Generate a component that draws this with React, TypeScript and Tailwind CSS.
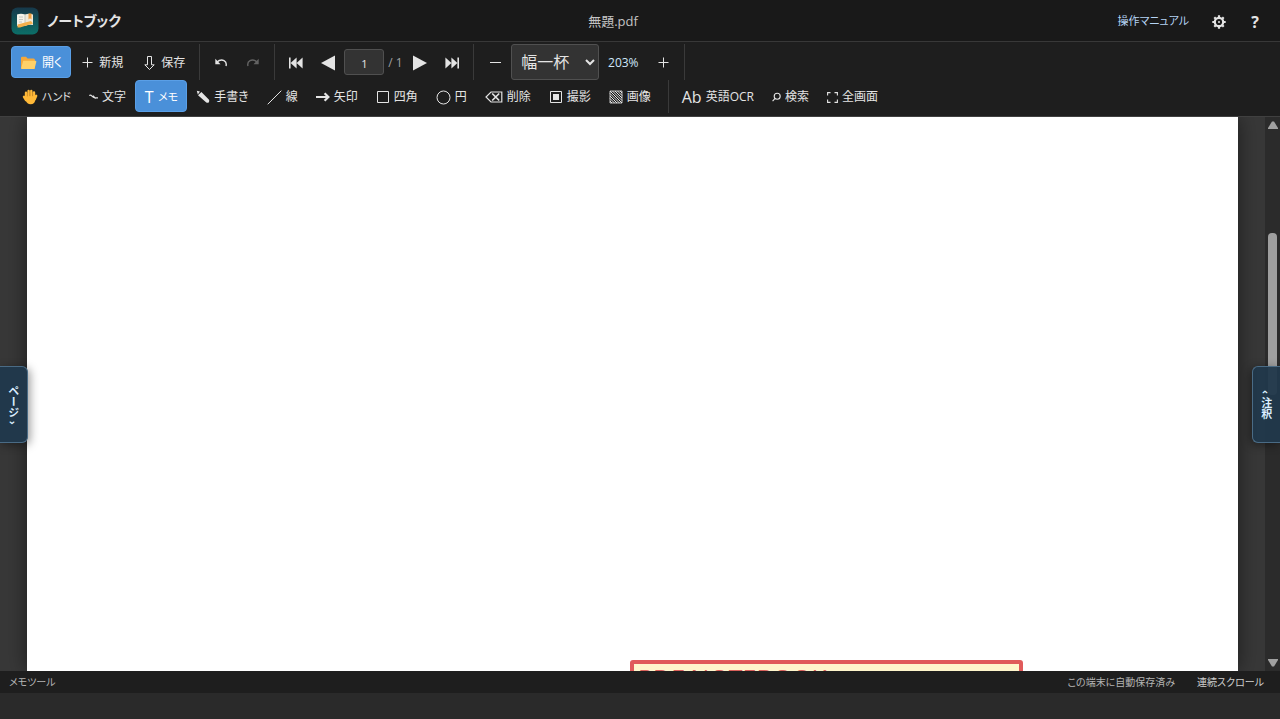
import { useState, type ReactNode } from 'react'

const BTN = 'flex h-8 shrink-0 items-center justify-center rounded border pt-[2px] whitespace-nowrap'
const BTN_OFF = 'border-transparent hover:bg-[#333]'
const BTN_ON = 'border-[#5a9fe6] bg-[#4a90d9] text-white'

function Logo() {
  return (
    <svg width="28" height="28" viewBox="0 0 28 28" aria-hidden="true">
      <defs>
        <linearGradient id="logoBg" x1="0" y1="0" x2="0" y2="1">
          <stop offset="0" stopColor="#17384a" />
          <stop offset="1" stopColor="#0c6f68" />
        </linearGradient>
      </defs>
      <rect x="0.5" y="0.5" width="27" height="27" rx="6" fill="url(#logoBg)" />
      <path d="M6 7.5Q10 6 14 7.5V19Q10 17.5 6 19Z" fill="#f6f3ea" />
      <path d="M14 7.5Q18 6 22 7.5V18Q18 17 14 19Z" fill="#efe9da" />
      <path d="M14 7.5V18.5M8 10h4M8 12.5h4M8 15h3" stroke="#b9bdb8" strokeWidth="0.8" />
      <path d="M17.5 6.5h3v6l-1.5-1.3-1.5 1.3z" fill="#f0a040" />
      <path d="M6.5 17.5L20 14l2 2.5L9 20.5H6.5z" fill="#f5b04c" />
    </svg>
  )
}

function FolderIcon() {
  return (
    <svg width="17" height="14" viewBox="0 0 17 14" aria-hidden="true">
      <path d="M1 2Q1 .8 2.2.8H6l1.6 1.7h6Q15 2.5 15 4v9H2Q1 13 1 12z" fill="#f5a83b" />
      <path d="M3.2 4.8h12.2q1.1 0 .9 1.2l-1.6 6q-.3 1-1.3 1H2q-1 0-.8-1z" fill="#ffd16a" />
    </svg>
  )
}

function HandIcon() {
  return (
    <svg width="16" height="16" viewBox="0 0 16 16" fill="none" stroke="#ffb938" strokeLinecap="round" aria-hidden="true">
      <path d="M4 8V3.8M6.6 7V2M9.3 7V1.9M12 8V3.4" strokeWidth="2.4" />
      <path d="M2 7.8l2 3.2M14.2 6.8L12.6 10.5" strokeWidth="2.4" />
      <path d="M3 7h10.2v3.4Q13 15 8.6 15.2 5 15.2 3.6 11.6z" fill="#ffb938" stroke="none" />
      <path d="M5.3 4.5v3M8 3.5v3.6M10.7 4v3.2" stroke="#e09320" strokeWidth="0.5" />
    </svg>
  )
}

const line = { fill: 'none', stroke: 'currentColor', 'aria-hidden': true } as const

const Plus = () => <svg width="11" height="12" viewBox="0 0 11 12" {...line}><path d="M.5 5.5h10M5.5.5v10" /></svg>
const Minus = () => <svg width="11" height="12" viewBox="0 0 11 12" {...line}><path d="M0 5.5h11" /></svg>
const DownArrow = () => <svg width="11" height="14" viewBox="0 0 11 14" {...line}><path d="M3.5.5h4v8.3h2.7L5.5 13.5.8 8.8h2.7z" /></svg>
const Undo = () => (
  <svg width="12" height="10" viewBox="0 0 12 10" {...line}>
    <path d="M1.7 4.2Q5.5 1 9 2.6q3 1.6 2 5.4" strokeWidth="1.4" />
    <path d="M.3.8v5.4h5.2z" fill="currentColor" stroke="none" />
  </svg>
)
const Redo = () => (
  <svg width="12" height="10" viewBox="0 0 12 10" {...line}>
    <path d="M10.3 4.2Q6.5 1 3 2.6 0 4.2 1 8" strokeWidth="1.4" />
    <path d="M11.7.8v5.4H6.5z" fill="currentColor" stroke="none" />
  </svg>
)
const First = () => <svg width="14" height="12" viewBox="0 0 14 12" fill="currentColor" aria-hidden="true"><path d="M0 .5h1.6v11H0zM1.6 6l6-5.5v11zM7.6 6l6-5.5v11z" /></svg>
const Last = () => <svg width="14" height="12" viewBox="0 0 14 12" fill="currentColor" aria-hidden="true"><path d="M12.4.5H14v11h-1.6zM12.4 6l-6-5.5v11zM6.4 6l-6-5.5v11z" /></svg>
const Prev = () => <svg width="14" height="16" viewBox="0 0 14 16" fill="currentColor" aria-hidden="true"><path d="M0 8L14 .5v15z" /></svg>
const Next = () => <svg width="14" height="16" viewBox="0 0 14 16" fill="currentColor" aria-hidden="true"><path d="M14 8L0 .5v15z" /></svg>

const Squiggle = () => (
  <svg width="9" height="8" viewBox="0 0 9 8" {...line}>
    <path d="M.3 2.6Q1.5 1.6 3 3.2T5.6 4.6L9 4.8M4 2.6l2.6 3" strokeWidth="1.2" />
  </svg>
)
const Letter = () => <span className="w-[10px] text-base leading-4">T</span>
const Pencil = () => (
  <svg width="14" height="14" viewBox="0 0 14 14" fill="currentColor" aria-hidden="true">
    <path d="M.8.8L4 1.4 1.8 4.4zM2 5.2L5.4 2l7.4 7.6q1 1.4.1 2.6-1.2 1-2.6.2z" />
  </svg>
)
const Diagonal = () => <svg width="15" height="15" viewBox="0 0 15 15" {...line}><path d="M.7 14.3L14.3.7" /></svg>
const Arrow = () => <svg width="14" height="12" viewBox="0 0 14 12" {...line}><path d="M0 6h12M8.6 2.2L12.4 6 8.6 9.8" strokeWidth="2.2" /></svg>
const Square = () => <svg width="14" height="14" viewBox="0 0 14 14" {...line}><path d="M1.5 1.5h11v11h-11z" /></svg>
const Circle = () => <svg width="15" height="15" viewBox="0 0 15 15" {...line}><circle cx="7.5" cy="7.5" r="6.5" /></svg>
const Erase = () => (
  <svg width="18" height="12" viewBox="0 0 18 12" {...line}>
    <path d="M6 1h10.8v10H6L1 6z" strokeWidth="1.2" />
    <path d="M7.2 2.5l7 7M14.2 2.5l-7 7" strokeWidth="1.7" />
  </svg>
)
const Capture = () => <svg width="14" height="14" viewBox="0 0 14 14" {...line}><path d="M1.5 1.5h11v11h-11z" /><path d="M4 4h6v6H4z" fill="currentColor" stroke="none" /></svg>
const Hatch = () => (
  <svg width="14" height="14" viewBox="0 0 14 14" {...line}>
    <path d="M1 1h12v12H1z" strokeWidth="0.8" />
    <path d="M1 1l12 12M3.5 1L13 10.5M6 1l7 7M8.5 1L13 5.5M11 1l2 2M1 3.5L10.5 13M1 6l7 7M1 8.5L5.5 13M1 11l2 2" />
  </svg>
)
const Lens = () => <svg width="9" height="10" viewBox="0 0 9 10" {...line}><circle cx="5.2" cy="4.2" r="3" strokeWidth="1.1" /><path d="M3.1 6.4L.6 9.2" strokeWidth="1.1" /></svg>
const Full = () => <svg width="11" height="11" viewBox="0 0 11 11" {...line}><path d="M.6 3.5V.6h2.9M7.5.6h2.9v2.9M10.4 7.5v2.9H7.5M3.5 10.4H.6V7.5" strokeWidth="1.1" /></svg>
const Gear = () => (
  <svg width="14" height="14" viewBox="0 0 14 14" {...line}>
    <circle cx="7" cy="7" r="4.2" strokeWidth="2.2" />
    <circle cx="7" cy="7" r="1" fill="currentColor" stroke="none" />
    <path d="M7 .3v2M7 11.7v2M.3 7h2M11.7 7h2M2.3 2.3l1.4 1.4M10.3 10.3l1.4 1.4M11.7 2.3l-1.4 1.4M3.7 10.3l-1.4 1.4" strokeWidth="2.2" />
  </svg>
)

type Tool = { id: string; label: string; icon: ReactNode; kana?: boolean }

const TOOLS: Tool[] = [
  { id: 'hand', label: 'ハンド', icon: <HandIcon />, kana: true },
  { id: 'text', label: '文字', icon: <Squiggle /> },
  { id: 'memo', label: 'メモ', icon: <Letter />, kana: true },
  { id: 'pen', label: '手書き', icon: <Pencil /> },
  { id: 'line', label: '線', icon: <Diagonal /> },
  { id: 'arrow', label: '矢印', icon: <Arrow /> },
  { id: 'rect', label: '四角', icon: <Square /> },
  { id: 'circle', label: '円', icon: <Circle /> },
  { id: 'erase', label: '削除', icon: <Erase /> },
  { id: 'capture', label: '撮影', icon: <Capture /> },
  { id: 'image', label: '画像', icon: <Hatch /> },
]

const ACTIONS: Tool[] = [
  { id: 'ocr', label: '英語OCR', icon: <span className="text-base leading-4">Ab</span> },
  { id: 'search', label: '検索', icon: <Lens /> },
  { id: 'full', label: '全画面', icon: <Full /> },
]

function IconButton({ label, disabled, children }: { label: string; disabled?: boolean; children: ReactNode }) {
  return (
    <button aria-label={label} disabled={disabled} className={`${BTN} ${BTN_OFF} w-8 disabled:opacity-35`}>{children}</button>
  )
}

export default function App() {
  const [tool, setTool] = useState('memo')
  const [page, setPage] = useState('1')
  const [zoom, setZoom] = useState('width')

  return (
    <div className="flex h-screen flex-col overflow-hidden bg-[#2a2a2a] pb-[26px] font-['Open_Sans','Noto_Sans_CJK_JP',sans-serif] text-xs text-[#e4e4e4] [font-feature-settings:'palt']">
      <header className="grid h-[42px] shrink-0 grid-cols-[1fr_auto_1fr] items-center border-b border-[#383838] bg-[#191919] pr-[9px] pl-[11px]">
        <div className="flex items-center gap-2">
          <Logo />
          <h1 className="text-sm font-semibold">ノートブック</h1>
        </div>
        <span className="pt-[2px] pr-14 text-[13px] text-[#c4c4c4]">無題.pdf</span>
        <div className="flex items-center justify-end gap-1">
          <a href="#manual" className="pt-[2px] pr-[10px] text-[11px] text-[#b5d4f5]">操作マニュアル</a>
          <IconButton label="設定"><Gear /></IconButton>
          <IconButton label="ヘルプ"><span className="text-base font-bold">?</span></IconButton>
        </div>
      </header>

      <div className="shrink-0 border-b border-[#404040] bg-[#1e1e1e] px-[11px] pt-[2px] pb-[3px]">
        <div className="flex h-9 items-center">
          <div className="flex h-full items-center gap-px border-r border-[#3a3a3a] pr-1">
            <button className={`${BTN} ${BTN_ON} gap-[5px] px-2`}><FolderIcon />開く</button>
            <button className={`${BTN} ${BTN_OFF} gap-[6px] px-[9px]`}><Plus />新規</button>
            <button className={`${BTN} ${BTN_OFF} gap-[6px] px-[9px]`}><DownArrow />保存</button>
          </div>
          <div className="flex h-full items-center border-r border-[#3a3a3a] px-[5px]">
            <IconButton label="元に戻す"><Undo /></IconButton>
            <IconButton label="やり直し" disabled><Redo /></IconButton>
          </div>
          <div className="flex h-full items-center border-r border-[#3a3a3a] px-[5px]">
            <IconButton label="最初のページ"><First /></IconButton>
            <IconButton label="前のページ"><Prev /></IconButton>
            <input aria-label="ページ番号" value={page} onChange={e => setPage(e.target.value)} className="h-[26px] w-10 rounded-[3px] border border-[#505050] bg-[#333] pt-[2px] text-center text-[11px]" />
            <span className="w-5 pt-[2px] pl-1 whitespace-nowrap text-[#a0a0a0]">/ 1</span>
            <IconButton label="次のページ"><Next /></IconButton>
            <IconButton label="最後のページ"><Last /></IconButton>
          </div>
          <div className="flex h-full items-center border-r border-[#3a3a3a] px-[5px]">
            <IconButton label="縮小"><Minus /></IconButton>
            <select aria-label="表示倍率" value={zoom} onChange={e => setZoom(e.target.value)} className="h-9 w-[88px] rounded-[3px] border border-[#505050] bg-[#333] px-[5px] text-base">
              <option value="width">幅一杯</option>
              <option value="page">全体</option>
            </select>
            <span className="w-12 pt-[2px] text-center text-[#cfe6fa]">203%</span>
            <IconButton label="拡大"><Plus /></IconButton>
          </div>
        </div>

        <div className="flex h-[33px] items-start">
          <div className="flex h-full items-start border-r border-[#3a3a3a] pr-2 pl-[2px]">
            {TOOLS.map(t => (
              <button key={t.id} onClick={() => setTool(t.id)} aria-pressed={tool === t.id} className={`${BTN} ${tool === t.id ? BTN_ON : BTN_OFF} ${t.kana ? 'text-[11px]' : ''} gap-1 px-2`}>
                {t.icon}{t.label}
              </button>
            ))}
          </div>
          <div className="flex items-start pl-1">
            {ACTIONS.map(t => (
              <button key={t.id} className={`${BTN} ${BTN_OFF} gap-1 px-2`}>{t.icon}{t.label}</button>
            ))}
          </div>
        </div>
      </div>

      <main className="relative flex min-h-0 flex-1 bg-[#383838]">
        <div className="min-w-0 flex-1 overflow-hidden px-[27px]">
          {/* PDF page */}
          <div className="relative h-full bg-white shadow-[0_0_20px_rgba(0,0,0,0.5)]">
            <div className="absolute top-[543px] left-[603px] h-32 w-[393px] rounded-[3px] border-4 border-[#e05a5a] bg-[#fff6cc] pl-1 text-[25px] leading-7 text-[#d9605a]">
              PDF NOTEBOOK
            </div>
          </div>
        </div>

        {/* scrollbar */}
        <div className="flex w-[15px] shrink-0 flex-col items-center bg-[#2b2b2b] py-1">
          <svg width="10" height="8" viewBox="0 0 10 8" fill="#a0a0a0" aria-hidden="true"><path d="M4 .5h2L10 7v1H0V7z" /></svg>
          <div className="w-full flex-1 px-[3px] pt-[104px]">
            <div className="h-[162px] rounded bg-[#9f9f9f]" />
          </div>
          <svg width="10" height="8" viewBox="0 0 10 8" fill="#a0a0a0" aria-hidden="true"><path d="M4 7.5h2L10 1V0H0v1z" /></svg>
        </div>

        <button className="absolute top-[249px] left-0 flex h-[77px] w-7 items-center justify-center rounded-r-md border border-l-0 border-[#4a6b85] bg-[#21384b] pr-[2px] text-[11px] font-bold text-[#dcefff] shadow-[2px_2px_10px_rgba(0,0,0,0.4)] [writing-mode:vertical-rl]">
          ページ ›
        </button>
        <button className="absolute top-[249px] right-0 flex h-[77px] w-7 items-center justify-center rounded-l-md border border-r-0 border-[#4a6b85] bg-[#21384b]/95 pr-[2px] text-[11px] font-bold text-[#dcefff] shadow-[-2px_2px_10px_rgba(0,0,0,0.4)] [writing-mode:vertical-rl]">
          ‹ 注釈
        </button>
      </main>

      <footer className="flex h-[22px] shrink-0 items-center gap-[22px] bg-[#1e1e1e] pt-[2px] pr-4 pl-[9px] text-[10px] text-[#b4b4b4]">
        <span className="flex-1">メモツール</span>
        <span>この端末に自動保存済み</span>
        <span className="text-[#cfcfcf]">連続スクロール</span>
      </footer>
    </div>
  )
}
